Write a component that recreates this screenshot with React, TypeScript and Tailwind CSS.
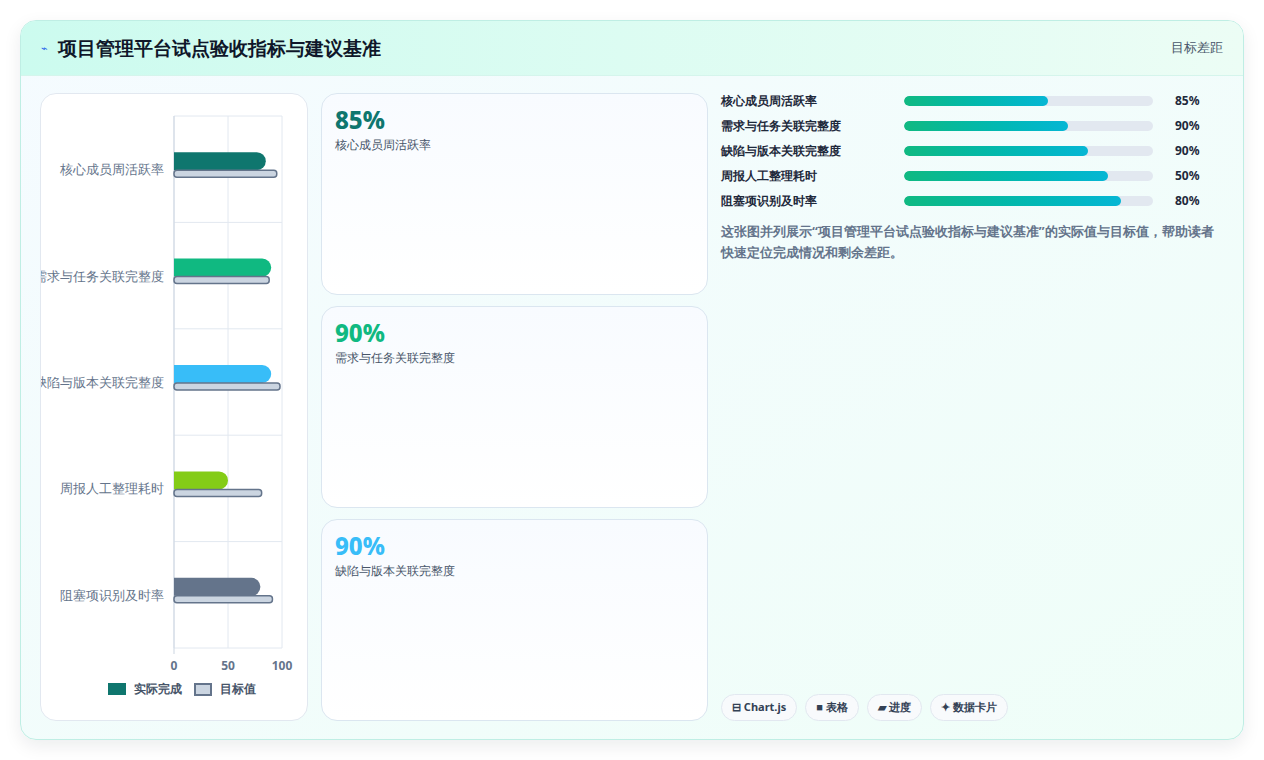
import React from 'react';

const rows = [
  { name: '核心成员周活跃率', actual: 85, target: 97, color: '#0f766e', fill: 58, pct: '85%' },
  { name: '需求与任务关联完整度', actual: 90, target: 90, color: '#10b981', fill: 66, pct: '90%' },
  { name: '缺陷与版本关联完整度', actual: 90, target: 100, color: '#38bdf8', fill: 74, pct: '90%' },
  { name: '周报人工整理耗时', actual: 50, target: 83, color: '#84cc16', fill: 82, pct: '50%' },
  { name: '阻塞项识别及时率', actual: 80, target: 93, color: '#64748b', fill: 87, pct: '80%' },
];

const cards = [
  { pct: '85%', name: '核心成员周活跃率', color: 'text-[#0f766e]' },
  { pct: '90%', name: '需求与任务关联完整度', color: 'text-[#10b981]' },
  { pct: '90%', name: '缺陷与版本关联完整度', color: 'text-[#38bdf8]' },
];

function Chart() {
  // plot x 133..241, y 22..554 inside the chart card
  const x0 = 133, sc = 1.08, top = 22, bandH = 106.4;
  return (
    <svg width="266" height="586" className="block shrink-0">
      {[0, 50, 100].map((v) => (
        <line key={v} x1={x0 + v * sc} x2={x0 + v * sc} y1={top} y2={554} stroke="#e2e8f0" />
      ))}
      {[0, 1, 2, 3, 4, 5].map((i) => (
        <line key={i} x1={x0} x2={x0 + 108} y1={top + i * bandH} y2={top + i * bandH} stroke="#e2e8f0" />
      ))}
      <line x1={x0} x2={x0} y1={top} y2={560} stroke="#cbd5e1" />
      {rows.map((r, i) => {
        const cy = top + i * bandH + bandH / 2;
        return (
          <g key={r.name}>
            <text x={123} y={cy + 5} textAnchor="end" fontSize="13" fill="#64748b">{r.name}</text>
            <path d={`M${x0} ${cy - 17} H${x0 + r.actual * sc - 9} a9 9 0 0 1 0 18 H${x0} Z`} fill={r.color} />
            <rect x={x0} y={cy + 1} width={r.target * sc - 2} height={7} rx={3} fill="#cbd5e1" stroke="#64748b" strokeWidth="1.5" />
          </g>
        );
      })}
      {[0, 50, 100].map((v) => (
        <text key={v} x={x0 + v * sc} y={576} textAnchor="middle" fontSize="12" fontWeight="700" fill="#64748b">{v}</text>
      ))}
    </svg>
  );
}

export default function App() {
  return (
    <div className="w-[1264px] h-[760px] bg-white p-5 font-['Noto_Sans','Noto_Sans_CJK_SC',sans-serif]">
      <div className="h-[720px] rounded-2xl border border-[#bfeee4] overflow-hidden flex flex-col bg-gradient-to-br from-[#f5fbff] to-[#effef8] shadow-[0_6px_18px_rgba(15,23,42,0.08)]">
        <div className="h-[55px] shrink-0 flex items-center justify-between px-5 bg-gradient-to-r from-[#ccfbef] to-[#ecfdf5] border-b border-[#d5f5ec]">
          <div className="flex items-center gap-2.5">
            <span className="text-[11px] text-[#2563eb]">⌁</span>
            <h1 className="text-[19px] font-extrabold text-[#0f172a]">项目管理平台试点验收指标与建议基准</h1>
          </div>
          <span className="text-[13px] text-[#475569] font-medium">目标差距</span>
        </div>
        <div className="flex-1 min-h-0 flex gap-[13px] pl-[19px] pr-5 pt-[17px] pb-[18px]">
          <div className="w-[268px] shrink-0 rounded-2xl border border-[#e2e8f0] bg-white overflow-hidden flex flex-col">
            <Chart />
            <div className="flex items-center justify-center gap-2 text-[12px] font-bold text-[#475569] ml-4">
              <span className="w-[18px] h-[12px] bg-[#0f766e]" />
              <span>实际完成</span>
              <span className="w-[18px] h-[13px] bg-[#cbd5e1] border-2 border-[#64748b] ml-1" />
              <span>目标值</span>
            </div>
          </div>
          <div className="w-[387px] shrink-0 flex flex-col gap-[11px]">
            {cards.map((c) => (
              <div key={c.pct} className="flex-1 rounded-2xl border border-[#dbe6f0] bg-gradient-to-b from-[#f8fbff] to-white px-[13px] pt-[10px]">
                <div className={`text-[24px] font-extrabold leading-[32px] ${c.color}`}>{c.pct}</div>
                <div className="text-[12px] text-[#475569] font-medium">{c.name}</div>
              </div>
            ))}
          </div>
          <div className="flex-1 flex flex-col">
            <div className="flex flex-col gap-[9px]">
              {rows.map((r) => (
                <div key={r.name} className="flex items-center h-[16px] text-[12px] font-bold text-[#1e293b]">
                  <span className="w-[183px]">{r.name}</span>
                  <div className="w-[249px] h-[10px] rounded-full bg-[#e2e8f0] overflow-hidden">
                    <div className="h-full rounded-full bg-gradient-to-r from-[#10b981] to-[#06b6d4]" style={{ width: `${r.fill}%` }} />
                  </div>
                  <span className="ml-[22px]">{r.pct}</span>
                </div>
              ))}
            </div>
            <p className="mt-[12px] text-[13px] leading-[21px] font-bold text-[#64748b] pr-1">
              这张图并列展示“项目管理平台试点验收指标与建议基准”的实际值与目标值，帮助读者快速定位完成情况和剩余差距。
            </p>
            <div className="mt-auto flex gap-2 text-[11px] font-bold text-[#334155]">
              <span className="px-2.5 h-[27px] flex items-center rounded-full border border-[#e2e8f0] bg-[#f8fafc]">⊟ Chart.js</span>
              <span className="px-2.5 h-[27px] flex items-center rounded-full border border-[#e2e8f0] bg-[#f8fafc]">■ 表格</span>
              <span className="px-2.5 h-[27px] flex items-center rounded-full border border-[#e2e8f0] bg-[#f8fafc]">▰ 进度</span>
              <span className="px-2.5 h-[27px] flex items-center rounded-full border border-[#e2e8f0] bg-[#f8fafc]">✦ 数据卡片</span>
            </div>
          </div>
        </div>
      </div>
    </div>
  );
}
